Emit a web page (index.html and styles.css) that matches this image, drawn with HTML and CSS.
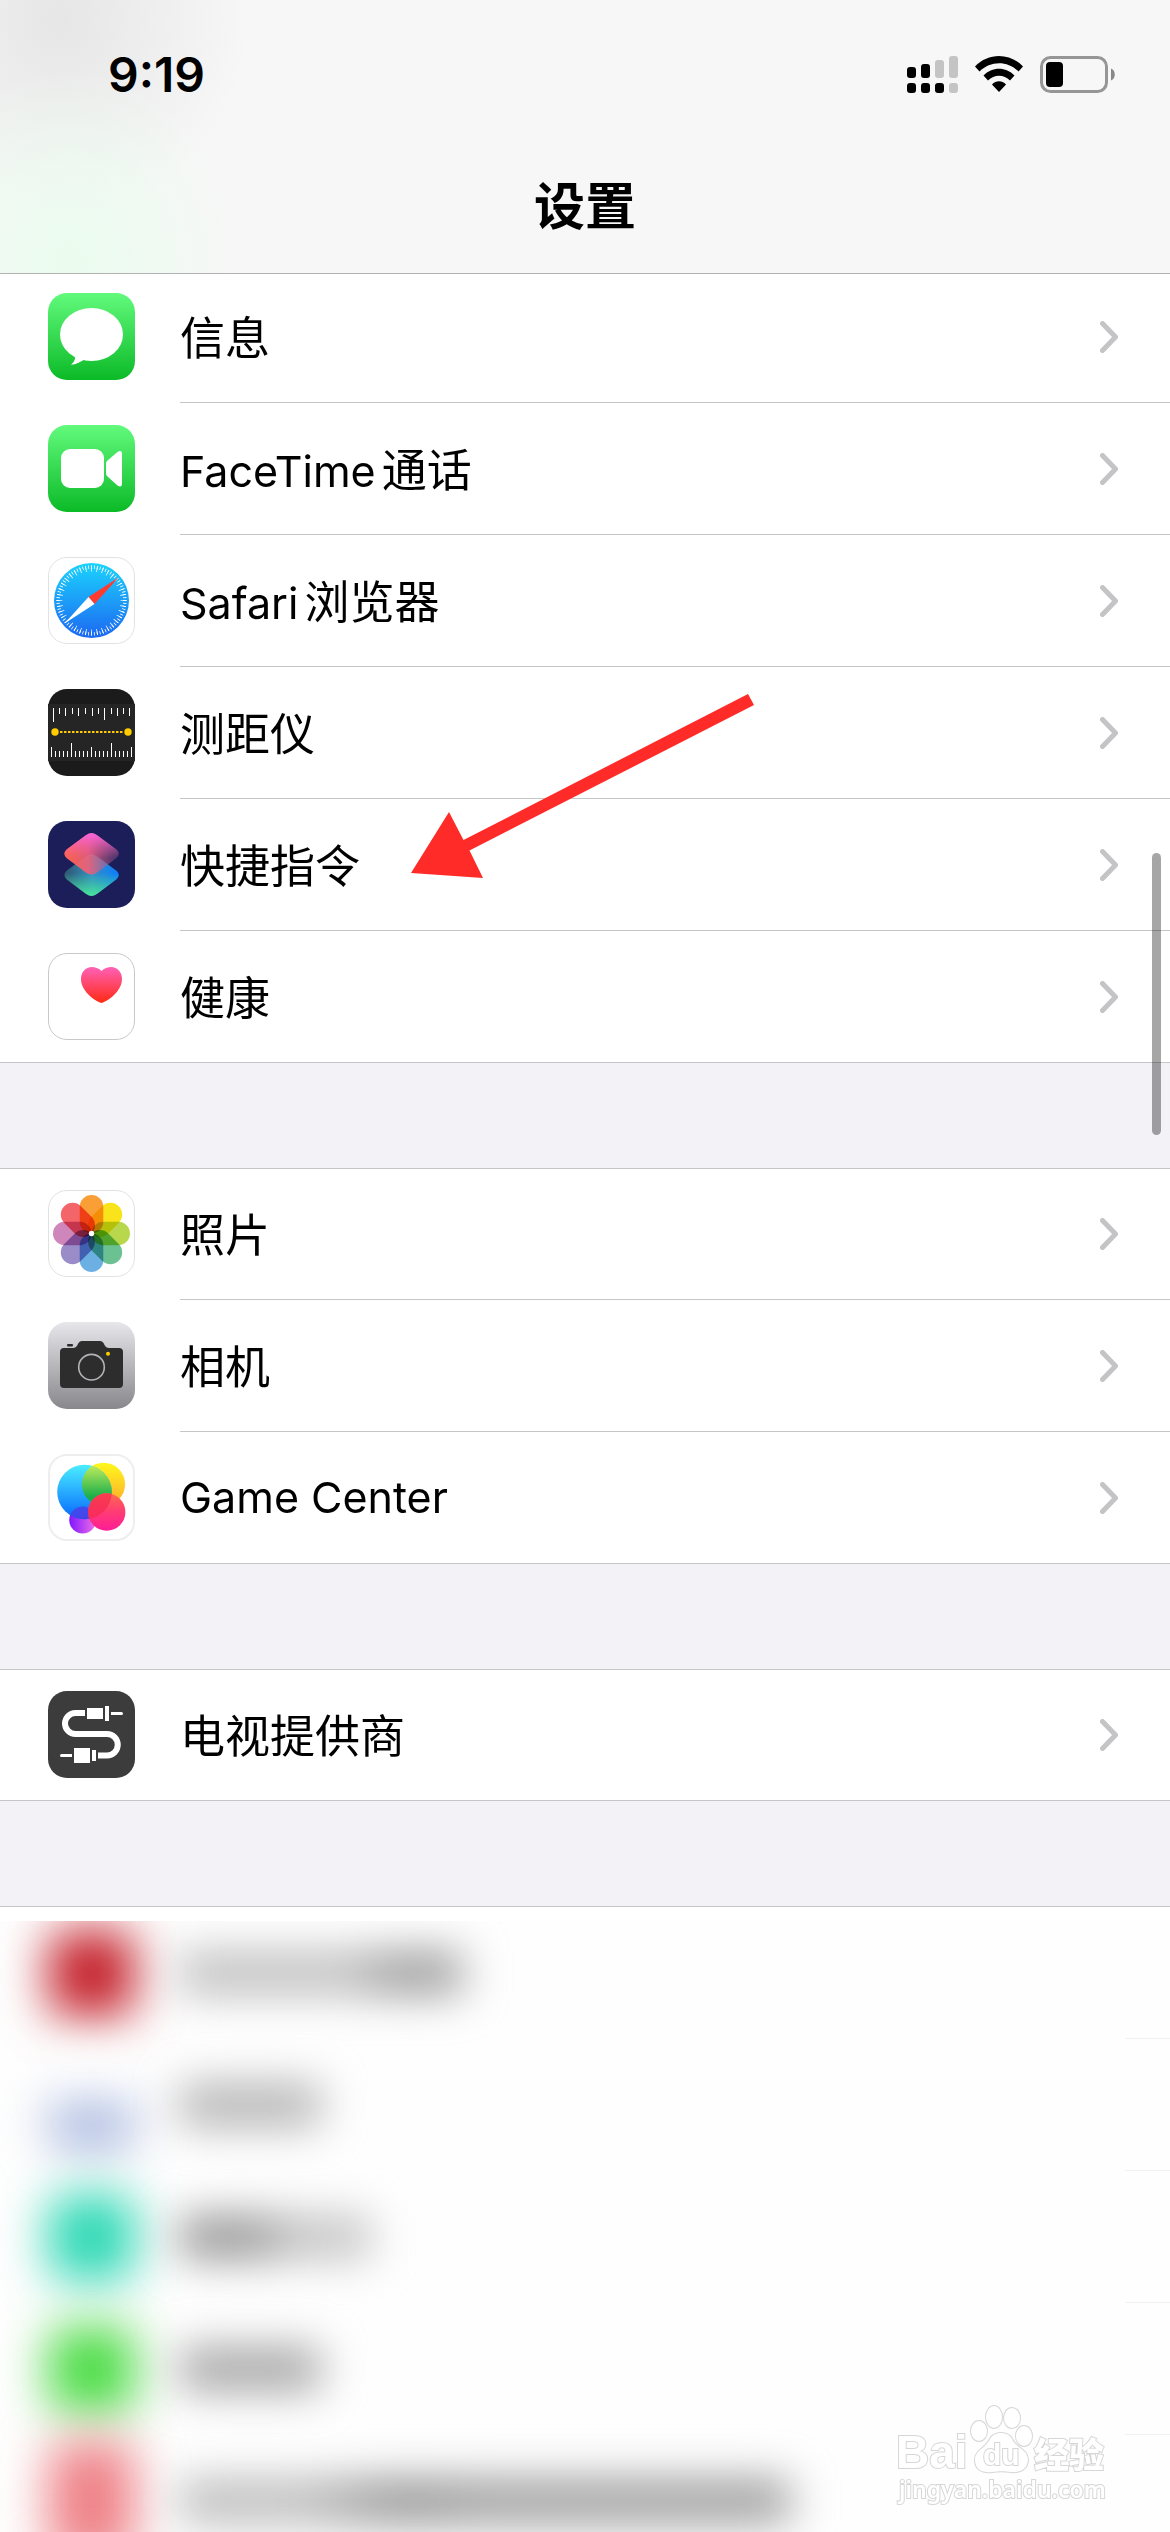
FILE: index.html
```html
<!DOCTYPE html>
<html lang="zh-CN">
<head>
  <meta charset="UTF-8">
  <meta name="viewport" content="width=device-width, initial-scale=1">
  <title>设置</title>
  <link rel="stylesheet" href="styles.css">
</head>
<body>
  <header class="topbar">
    <div class="status">
      <time class="clock">9:19</time>
      <div class="status-icons">
        <svg width="51" height="37" viewBox="0 0 51 37">
          <rect x="0" y="11" width="9" height="11" rx="3"/>
          <rect x="14" y="8" width="9" height="14" rx="3"/>
          <rect x="28" y="4" width="9" height="18" rx="3" fill="#c4c4c4"/>
          <rect x="42" y="0" width="9" height="22" rx="3" fill="#c4c4c4"/>
          <rect x="0" y="27" width="9" height="10" rx="3"/>
          <rect x="14" y="27" width="9" height="10" rx="3"/>
          <rect x="28" y="27" width="9" height="10" rx="3"/>
          <rect x="42" y="27" width="9" height="10" rx="3" fill="#c4c4c4"/>
        </svg>
        <svg class="wifi" width="48" height="36" viewBox="0 0 48 36">
          <path d="M0 10.500C13-3.500 35-3.500 48 10.500L43.500 15.500C32.500 4.500 15.500 4.500 4.500 15.500Z"/>
          <path d="M8.500 19.500C17 10.500 31 10.500 39.500 19.500L35 24.500C29 18 19 18 13 24.500Z"/>
          <path d="M17 28.500C21 24.300 27 24.300 31 28.500L24 36Z"/>
        </svg>
        <svg width="76" height="37" viewBox="0 0 76 37">
          <rect x="1.500" y="1.500" width="65" height="34" rx="9" fill="none" stroke="#969696" stroke-width="3"/>
          <rect x="6" y="6" width="17" height="25" rx="4"/>
          <path d="M71 12.500C76 14 76 23 71 24.500Z" fill="#888"/>
        </svg>
      </div>
    </div>
    <h1>设置</h1>
  </header>

  <main>
    <ul class="group">
      <li>
        <a class="row" href="#messages">
          <svg class="icon" viewBox="0 0 87 87">
            <defs><linearGradient id="green" x2="0" y2="1"><stop offset="0" stop-color="#62fa7c"/><stop offset="1" stop-color="#0bba27"/></linearGradient></defs>
            <rect width="87" height="87" rx="19" fill="url(#green)"/>
            <ellipse cx="43.500" cy="41.500" rx="31.500" ry="26.500" fill="#fff"/>
            <path d="M26 62Q29.500 66 23 71.800Q30 71 37 66Z" fill="#fff"/>
          </svg>
          <span class="label">信息</span>
          <svg class="chevron" viewBox="0 0 18 32"><path d="M2.500 2.500L15.500 16L2.500 29.500"/></svg>
        </a>
      </li>
      <li>
        <a class="row" href="#facetime">
          <svg class="icon" viewBox="0 0 87 87">
            <rect width="87" height="87" rx="19" fill="url(#green)"/>
            <rect x="13" y="24" width="43" height="39" rx="9" fill="#fff"/>
            <path d="M58 38.500Q58 36.500 59.500 35.500L69.500 27Q74 24.500 74 29V58.500Q74 63 69.500 60.500L59.500 51.500Q58 50.500 58 48.500Z" fill="#fff"/>
          </svg>
          <span class="label"><span class="latin">FaceTime</span>通话</span>
          <svg class="chevron" viewBox="0 0 18 32"><path d="M2.500 2.500L15.500 16L2.500 29.500"/></svg>
        </a>
      </li>
      <li>
        <a class="row" href="#safari">
          <svg class="icon" viewBox="0 0 87 87">
            <defs><linearGradient id="compass" x2="0" y2="1"><stop offset="0" stop-color="#1bd3fd"/><stop offset="1" stop-color="#1d68f1"/></linearGradient></defs>
            <rect x=".5" y=".5" width="86" height="86" rx="18.500" fill="#fff" stroke="#e2e2e2"/>
            <circle cx="43.500" cy="43.500" r="37.500" fill="url(#compass)"/>
            <g fill="none" stroke="#fff">
              <circle cx="43.500" cy="43.500" r="33.300" stroke-width="3.500" pathLength="72" stroke-dasharray=".27 .73" stroke-dashoffset=".13"/>
              <circle cx="43.500" cy="43.500" r="32" stroke-width="6" pathLength="36" stroke-dasharray=".14 .86" stroke-dashoffset=".07"/>
            </g>
            <path d="M70.500 20.500L40.500 40L46.500 47Z" fill="#ff3b30"/>
            <path d="M16.500 66.500L40.500 40L46.500 47Z" fill="#fff"/>
          </svg>
          <span class="label"><span class="latin">Safari</span>浏览器</span>
          <svg class="chevron" viewBox="0 0 18 32"><path d="M2.500 2.500L15.500 16L2.500 29.500"/></svg>
        </a>
      </li>
      <li>
        <a class="row" href="#measure">
          <svg class="icon" viewBox="0 0 87 87">
            <rect width="87" height="87" rx="19" fill="#1b1b1b"/>
            <rect y="15" width="87" height="57" fill="#252525"/>
            <path d="M5.500 19v14M11.500 19v6M17.500 19v8M24.500 19v6M30.500 19v8M37.500 19v6M44.500 19v8M50.500 19v6M56.500 19v12M63.500 19v6M69.500 19v8M75.500 19v6M81.500 19v8" stroke="#fff"/>
            <path d="M3.500 68v-10M7.500 68v-6M11.500 68v-6M15.500 68v-6M19.500 68v-6M23.500 68v-14M27.500 68v-6M31.500 68v-6M35.500 68v-6M39.500 68v-6M43.500 68v-10M47.500 68v-6M51.500 68v-6M55.500 68v-6M59.500 68v-6M63.500 68v-14M67.500 68v-6M71.500 68v-6M75.500 68v-6M79.500 68v-6M83.500 68v-10" stroke="#fff"/>
            <path d="M12 43H76" stroke="#ffcc00" stroke-width="2" stroke-dasharray="2.500 1.500"/>
            <circle cx="7" cy="43" r="3.700" fill="#ffcc00"/>
            <circle cx="80" cy="43" r="3.700" fill="#ffcc00"/>
          </svg>
          <span class="label">测距仪</span>
          <svg class="chevron" viewBox="0 0 18 32"><path d="M2.500 2.500L15.500 16L2.500 29.500"/></svg>
        </a>
      </li>
      <li class="pointed">
        <a class="row" href="#shortcuts">
          <svg class="icon" viewBox="0 0 87 87">
            <defs>
              <linearGradient id="orange"><stop offset="0" stop-color="#ff634c"/><stop offset=".45" stop-color="#f0607a" stop-opacity=".9"/><stop offset="1" stop-color="#a05a90" stop-opacity=".3"/></linearGradient>
              <linearGradient id="pink" x2="0" y2="1"><stop offset="0" stop-color="#fb63e0"/><stop offset=".6" stop-color="#fb63a8" stop-opacity="0"/></linearGradient>
              <linearGradient id="blue"><stop offset="0" stop-color="#2e5570"/><stop offset=".5" stop-color="#3590c0"/><stop offset="1" stop-color="#0a7cff"/></linearGradient>
              <linearGradient id="mint" x2="0" y2="1"><stop offset=".45" stop-color="#40d89a" stop-opacity="0"/><stop offset="1" stop-color="#48e69a"/></linearGradient>
              <path id="tile" d="M37.500 14.500Q43.500 9.500 49.500 14.500L68.500 28.500Q73 32.800 68.500 37L49.500 51.200Q43.500 56 37.500 51.200L18.500 37Q14.300 32.800 18.500 28.500Z"/>
            </defs>
            <rect width="87" height="87" rx="19" fill="#1c1e59"/>
            <g transform="translate(0 21.300)"><use href="#tile" fill="url(#blue)"/><use href="#tile" fill="url(#mint)"/></g>
            <use href="#tile" fill="url(#orange)"/><use href="#tile" fill="url(#pink)"/>
          </svg>
          <span class="label">快捷指令</span>
          <svg class="chevron" viewBox="0 0 18 32"><path d="M2.500 2.500L15.500 16L2.500 29.500"/></svg>
        </a>
        <svg class="arrow" viewBox="0 0 344 185"><path d="M0 179L38 118L52.500 146L337 0L343 11L58.500 156.500L72 184Z"/></svg>
      </li>
      <li>
        <a class="row" href="#health">
          <svg class="icon" viewBox="0 0 87 87">
            <defs><linearGradient id="heart" x2="0" y2="1"><stop offset="0" stop-color="#ff61b8"/><stop offset="1" stop-color="#ff2a12"/></linearGradient></defs>
            <rect x=".5" y=".5" width="86" height="86" rx="18.500" fill="#fff" stroke="#c9c9c9"/>
            <path d="M53.500 18C56.500 15 60 14 63 14C69.500 14 74 19 74 26C74 37 63 46 55 49.600Q53.500 50.500 52 49.600C44 46 33 37 33 26C33 19 37.500 14 44 14C47 14 50.500 15 53.500 18Z" fill="url(#heart)"/>
          </svg>
          <span class="label">健康</span>
          <svg class="chevron" viewBox="0 0 18 32"><path d="M2.500 2.500L15.500 16L2.500 29.500"/></svg>
        </a>
      </li>
    </ul>

    <ul class="group">
      <li>
        <a class="row" href="#photos">
          <svg class="icon" viewBox="0 0 87 87">
            <rect x=".5" y=".5" width="86" height="86" rx="18.500" fill="#fff" stroke="#e2e2e2"/>
            <g class="petals">
              <rect x="31.700" y="5" width="23.600" height="38.500" rx="11.800" fill="#fa9f35"/>
              <rect x="31.700" y="5" width="23.600" height="38.500" rx="11.800" fill="#f9e41c" transform="rotate(45 43.500 43.500)"/>
              <rect x="31.700" y="5" width="23.600" height="38.500" rx="11.800" fill="#b9d74c" transform="rotate(90 43.500 43.500)"/>
              <rect x="31.700" y="5" width="23.600" height="38.500" rx="11.800" fill="#6cc193" transform="rotate(135 43.500 43.500)"/>
              <rect x="31.700" y="5" width="23.600" height="38.500" rx="11.800" fill="#6cafe2" transform="rotate(180 43.500 43.500)"/>
              <rect x="31.700" y="5" width="23.600" height="38.500" rx="11.800" fill="#9a8cc8" transform="rotate(225 43.500 43.500)"/>
              <rect x="31.700" y="5" width="23.600" height="38.500" rx="11.800" fill="#cf86bb" transform="rotate(270 43.500 43.500)"/>
              <rect x="31.700" y="5" width="23.600" height="38.500" rx="11.800" fill="#f4656a" transform="rotate(315 43.500 43.500)"/>
            </g>
            <circle cx="43.500" cy="43.500" r="2.700" fill="#fff"/>
          </svg>
          <span class="label">照片</span>
          <svg class="chevron" viewBox="0 0 18 32"><path d="M2.500 2.500L15.500 16L2.500 29.500"/></svg>
        </a>
      </li>
      <li>
        <a class="row" href="#camera">
          <svg class="icon" viewBox="0 0 87 87">
            <defs><linearGradient id="steel" x2="0" y2="1"><stop offset="0" stop-color="#e6e6eb"/><stop offset="1" stop-color="#88878c"/></linearGradient></defs>
            <rect width="87" height="87" rx="19" fill="url(#steel)"/>
            <path d="M16 26H25Q28 26 29.500 23Q31 19 34 19H52Q55 19 56.500 23Q58 26 61 26H71Q75 26 75 30V62Q75 66 71 66H16Q12 66 12 62V30Q12 26 16 26Z" fill="#2d2d2d"/>
            <rect x="19" y="22" width="6" height="2.500" rx="1" fill="#2d2d2d"/>
            <circle cx="43.500" cy="45.200" r="12.800" fill="none" stroke="#b4b4b8" stroke-width="1.600"/>
            <circle cx="60" cy="31.700" r="2" fill="#ffcc00"/>
          </svg>
          <span class="label">相机</span>
          <svg class="chevron" viewBox="0 0 18 32"><path d="M2.500 2.500L15.500 16L2.500 29.500"/></svg>
        </a>
      </li>
      <li>
        <a class="row" href="#gamecenter">
          <svg class="icon" viewBox="0 0 87 87">
            <defs>
              <linearGradient id="gc-blue" x2="0" y2="1"><stop offset="0" stop-color="#4aeefe"/><stop offset="1" stop-color="#0668ff"/></linearGradient>
              <linearGradient id="gc-yellow" x2="0" y2="1"><stop offset="0" stop-color="#fff81c"/><stop offset="1" stop-color="#fda92e"/></linearGradient>
              <linearGradient id="gc-green" x2="0" y2="1"><stop offset="0" stop-color="#ccf05e"/><stop offset=".8" stop-color="#17ae4a"/></linearGradient>
              <linearGradient id="gc-purple"><stop offset="0" stop-color="#8016ff"/><stop offset="1" stop-color="#f070e8"/></linearGradient>
              <linearGradient id="gc-pink" x2="0" y2="1"><stop offset="0" stop-color="#ff6b50"/><stop offset=".45" stop-color="#ff3f70"/><stop offset="1" stop-color="#ff1c98"/></linearGradient>
              <clipPath id="gc-clip"><circle cx="36.500" cy="38" r="27.300"/></clipPath>
            </defs>
            <rect x="1" y="1" width="85" height="85" rx="18" fill="#fff" stroke="#eee" stroke-width="2"/>
            <circle cx="34.700" cy="66" r="13.500" fill="url(#gc-purple)"/>
            <circle cx="55.500" cy="30.300" r="21.600" fill="url(#gc-yellow)"/>
            <circle cx="36.500" cy="38" r="27.300" fill="url(#gc-blue)"/>
            <g clip-path="url(#gc-clip)">
              <circle cx="55.500" cy="30.300" r="21.600" fill="url(#gc-green)"/>
              <circle cx="34.700" cy="66" r="13.500" fill="#4b3fe8" opacity=".85"/>
            </g>
            <circle cx="58.700" cy="58" r="18.700" fill="url(#gc-pink)"/>
            <circle cx="58.700" cy="58" r="18.700" fill="#f52a50" opacity=".7" clip-path="url(#gc-clip)"/>
          </svg>
          <span class="label"><span class="latin">Game Center</span></span>
          <svg class="chevron" viewBox="0 0 18 32"><path d="M2.500 2.500L15.500 16L2.500 29.500"/></svg>
        </a>
      </li>
    </ul>

    <ul class="group">
      <li>
        <a class="row" href="#tv">
          <svg class="icon" viewBox="0 0 87 87">
            <rect width="87" height="87" rx="19" fill="#3c3c3c"/>
            <path d="M37 22H27.500a10.500 10.500 0 0 0 0 21H59a10.700 10.700 0 0 1 0 21.500H50" fill="none" stroke="#fff" stroke-width="6"/>
            <path d="M39 17h16v11h-16zM57 15h4v15h-4zM63 21h10.500a1.500 1.500 0 0 1 0 3H63zM26 57h16v15h-16zM44 59h4v11h-4zM24 63H13.500a1.500 1.500 0 0 0 0 3H24z" fill="#fff"/>
          </svg>
          <span class="label">电视提供商</span>
          <svg class="chevron" viewBox="0 0 18 32"><path d="M2.500 2.500L15.500 16L2.500 29.500"/></svg>
        </a>
      </li>
    </ul>

    <!-- third-party apps, hidden behind a blur -->
    <div class="group hidden-apps" aria-hidden="true">
      <div class="veil">
        <div class="row smudge red"><i class="icon"></i><b class="w1"></b></div>
        <div class="row smudge pale"><i class="icon"></i><b class="w2"></b></div>
        <div class="row smudge teal"><i class="icon"></i><b class="w3"></b></div>
        <div class="row smudge green"><i class="icon"></i><b class="w2"></b></div>
        <div class="row smudge rose"><i class="icon"></i><b class="w4"></b></div>
      </div>
    </div>
  </main>

  <div class="scrollbar"></div>

  <svg class="watermark" viewBox="0 0 220 110">
    <g class="mark">
      <text x="3" y="69" class="brand">Bai</text>
      <ellipse cx="86" cy="32" rx="8" ry="10"/>
      <ellipse cx="101" cy="18" rx="8" ry="11"/>
      <ellipse cx="119" cy="19" rx="8" ry="10"/>
      <ellipse cx="131" cy="37" rx="8" ry="10"/>
      <path d="M82 61C82 51 92 50 97 40C101 32 115 32 119 40C124 50 134 50 135 60C135 70 127 74 118 73C111 72 106 72 99 73C90 74 82 71 82 61Z"/>
      <text x="90" y="66" class="du">du</text>
      <text x="141" y="69" class="cn">经验</text>
      <text x="6" y="99" class="url">jingyan.baidu.com</text>
    </g>
  </svg>
</body>
</html>
```
FILE: styles.css
```css
* {
  box-sizing: border-box;
}
body {
  position: relative;
  margin: 0;
  height: 100vh;
  overflow: hidden;
  background: #f2f2f7;
  color: #000;
  font-family: Inter, "Noto Sans CJK SC", sans-serif;
  font-size: 45px;
}
ul {
  list-style: none;
  margin: 0;
  padding: 0;
}
svg {
  display: block;
  flex: none;
}

/* header */
.topbar {
  position: relative;
  z-index: 1;
  border-bottom: 1px solid #b2b2b2;
  background:
    radial-gradient(ellipse 170px 190px at 70px 260px, #eafcee, transparent),
    radial-gradient(ellipse 190px 200px at 60px 20px, #e6e6e6, transparent),
    #f7f7f7;
}
.status {
  display: flex;
  align-items: center;
  justify-content: space-between;
  height: 140px;
  padding: 8px 54px 0 108px;
}
.clock {
  font-size: 48px;
  font-weight: 600;
}
.status-icons {
  display: flex;
  align-items: center;
  gap: 17px;
}
h1 {
  margin: 0;
  padding-top: 1px;
  font-size: 51px;
  font-weight: 600;
  line-height: 132px;
  text-align: center;
}

/* list */
.group {
  margin-bottom: 105px;
  border-top: 1px solid #c6c6c8;
  border-bottom: 1px solid #c6c6c8;
  background: #fff;
}
/* first group is scrolled slightly under the header */
.group:first-child {
  margin-top: -4px;
}
.group li + li::before {
  content: "";
  display: block;
  margin-left: 180px;
  border-top: 1px solid #c6c6c8;
}
.row {
  display: flex;
  align-items: center;
  gap: 45px;
  height: 131px;
  padding: 0 52px 0 48px;
  color: inherit;
  text-decoration: none;
}
.group:nth-child(n+2) li:first-child .row {
  height: 130px;
  padding-bottom: 1px;
}
.icon {
  width: 87px;
  height: 87px;
}
.petals {
  isolation: isolate;
}
.petals rect {
  mix-blend-mode: multiply;
}
.label {
  flex: 1;
  padding-bottom: 3px;
}
.latin {
  margin-right: 6px;
  font-size: 43px;
}
.chevron {
  width: 18px;
  height: 32px;
  fill: none;
  stroke: #c4c4c6;
  stroke-width: 5;
  stroke-linecap: round;
  stroke-linejoin: round;
}
.pointed {
  position: relative;
}
.arrow {
  position: absolute;
  left: 411px;
  bottom: 51px;
  width: 344px;
  height: 185px;
  fill: #ff2b28;
}

/* blurred rows */
.hidden-apps {
  margin-bottom: 0;
  padding-top: 14px;
}
.veil {
  overflow: hidden;
  background: #fefefe;
}
.smudge {
  height: 132px;
  background: linear-gradient(#f1f1f1, #f1f1f1) right bottom / 45px 1px no-repeat;
}
.smudge:first-child {
  margin-top: -14px;
}
.smudge .icon {
  flex: none;
  border-radius: 19px;
  filter: blur(24px);
}
.smudge b {
  height: 42px;
  background: #b0b0b0;
  filter: blur(22px);
}
.w1 { width: 282px; }
.w2 { width: 140px; }
.w3 { width: 190px; }
.w4 { width: 610px; }
.smudge.red b { background: linear-gradient(90deg, #bcbcbc 60%, #989898 75%); }
.smudge.teal b { background: linear-gradient(90deg, #909090 40%, #c0c0c0 60%); }
.smudge.green b { background: #a0a0a0; }
.smudge.rose b { background: linear-gradient(90deg, #b8b8b8 20%, #8c8c8c 36%, #989898 50%); }
.red .icon { background: #c4202a; }
.pale .icon { background: linear-gradient(#fff 35%, #a4b4dc 60%); }
.teal .icon { background: #2cd8b4; }
.green .icon { background: #4cdc46; }
.smudge.rose .icon { height: 120px; background: #ee8288; }

/* overlays */
.scrollbar {
  position: absolute;
  top: 853px;
  right: 9px;
  width: 9px;
  height: 282px;
  border-radius: 5px;
  background: rgba(0, 0, 0, 0.35);
}
.watermark {
  position: absolute;
  right: 57px;
  bottom: 23px;
  width: 220px;
  height: 110px;
}
.mark {
  fill: #fff;
  stroke: #d6d6d6;
  stroke-width: 2;
  paint-order: stroke;
}
.brand {
  font: 700 46px "Liberation Sans", sans-serif;
}
.du {
  font: 700 30px "Liberation Sans", sans-serif;
}
.cn {
  font: 900 35px "Noto Sans CJK SC", sans-serif;
}
.url {
  font: 600 23px "Noto Sans", sans-serif;
}
```
